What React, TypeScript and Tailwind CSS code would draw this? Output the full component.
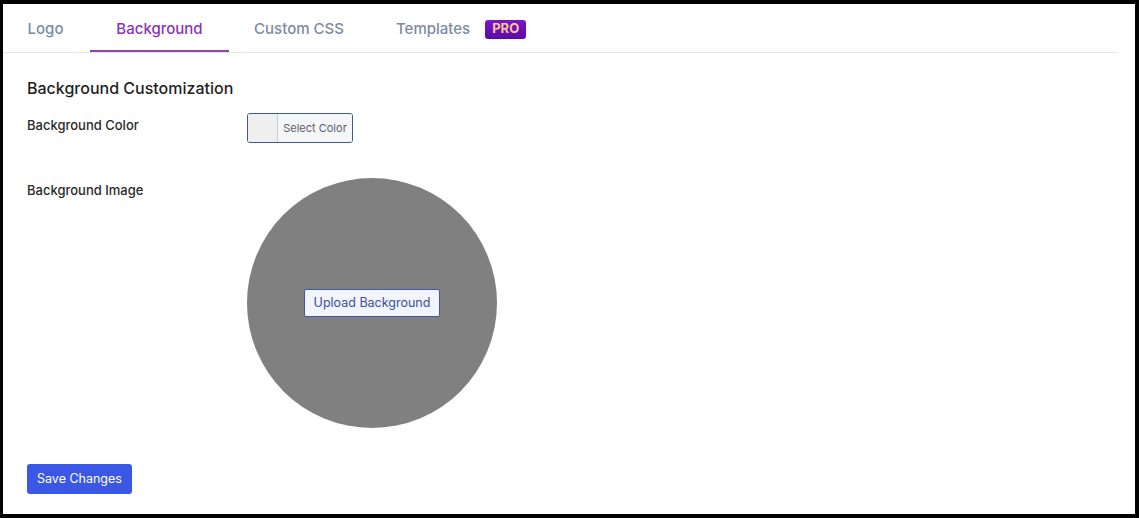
const tabs = [
  { label: 'Logo', w: 'w-[85px]', active: false },
  { label: 'Background', w: 'w-[139px]', active: true },
  { label: 'Custom CSS', w: 'w-[140px]', active: false },
];

export default function App() {
  return (
    <div
      className="h-[518px] w-[1139px] bg-white border-black border-t-[4px] border-l-[3px] border-r-[4px] border-b-[4px] flex flex-col"
      style={{ fontFamily: 'Inter, "Liberation Sans", sans-serif' }}
    >
      {/* tab bar */}
      <div className="flex items-end mr-[19px] border-b border-[#e6e6e6] h-[49px]">
        {tabs.map((t) => (
          <div
            key={t.label}
            className={`${t.w} h-12 flex items-center justify-center pt-[4px] text-[15px] font-medium border-b-2 ${
              t.active ? 'text-[#8a35b5] border-[#8e44ad] ml-[2px]' : 'text-[#7b8ba3] border-transparent'
            }`}
          >
            {t.label}
          </div>
        ))}
        <div className="h-12 flex items-center pt-[4px] pl-[27px] border-b-2 border-transparent">
          <span className="text-[15px] font-medium text-[#7b8ba3]">Templates</span>
          <span className="ml-[15px] h-[19px] px-[7px] flex items-center rounded-[3px] bg-gradient-to-b from-[#7a16c9] to-[#5c0aa6] text-[#f9c694] text-[13px] font-bold">
            PRO
          </span>
        </div>
      </div>

      {/* body */}
      <div className="pl-6 pt-[23px]">
        <h2 className="text-[16px] leading-6 font-medium text-[#1f1f1f]">Background Customization</h2>

        <div className="mt-[13px] flex">
          <div className="w-[220px] text-[13px] font-medium text-[#2a2a2a] pt-[3px]">Background Color</div>
          <div className="flex h-[30px] w-[106px] rounded-[3px] border border-[#3d5a96] overflow-hidden">
            <div className="w-[30px] bg-[#efefef] border-r border-[#c9cdd6]" />
            <div className="flex-1 bg-[#f5f6f8] flex items-center justify-center text-[11px] text-[#5a5f66]">
              Select Color
            </div>
          </div>
        </div>

        <div className="mt-[35px] flex">
          <div className="w-[220px] text-[13px] font-medium text-[#2a2a2a] pt-[3px]">Background Image</div>
          <div className="w-[250px] h-[250px] rounded-full bg-[#808080] flex items-center justify-center">
            <button className="h-[28px] px-[9px] rounded-[2px] border border-[#3d5aa0] bg-[#f1f4fb] text-[12.5px] text-[#3d4f9c]">
              Upload Background
            </button>
          </div>
        </div>

        <button className="mt-[36px] h-[30px] px-[10px] rounded-[3px] bg-[#3b57e6] text-white text-[12.5px]">
          Save Changes
        </button>
      </div>
    </div>
  );
}
